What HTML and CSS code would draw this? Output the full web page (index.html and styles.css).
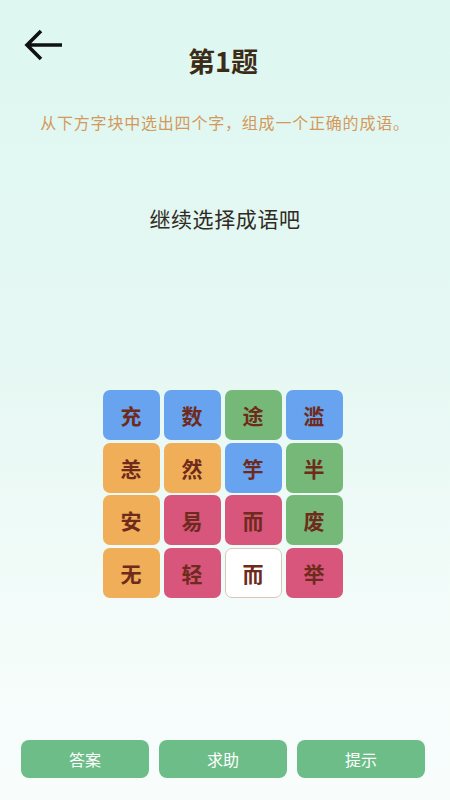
FILE: index.html
```html
<!DOCTYPE html>
<html lang="zh">
<head>
<meta charset="utf-8">
<link rel="stylesheet" href="styles.css">
</head>
<body>
<div class="page">
  <header class="header">
    <button class="back" aria-label="返回">
      <svg width="40" height="34" viewBox="0 0 40 34"><path d="M39 17H5M18 3L4 17L18 31" fill="none" stroke="#111" stroke-width="3.6" stroke-linecap="butt" stroke-linejoin="miter"/></svg>
    </button>
    <h1 class="title">第1题</h1>
    <span></span>
  </header>
  <p class="hint">从下方字块中选出四个字，组成一个正确的成语。</p>
  <p class="status">继续选择成语吧</p>
  <main class="board">
    <div class="grid">
      <div class="tile blue">充</div>
      <div class="tile blue">数</div>
      <div class="tile green">途</div>
      <div class="tile blue">滥</div>
      <div class="tile orange">恙</div>
      <div class="tile orange">然</div>
      <div class="tile blue">竽</div>
      <div class="tile green">半</div>
      <div class="tile orange">安</div>
      <div class="tile pink">易</div>
      <div class="tile pink">而</div>
      <div class="tile green">废</div>
      <div class="tile orange">无</div>
      <div class="tile pink">轻</div>
      <div class="tile white">而</div>
      <div class="tile pink">举</div>
    </div>
  </main>
  <footer class="actions">
    <button class="btn">答案</button>
    <button class="btn">求助</button>
    <button class="btn">提示</button>
  </footer>
</div>
</body>
</html>
```
FILE: styles.css
```css
* { box-sizing: border-box; }
html, body { margin: 0; padding: 0; }
body {
  font-family: "Noto Sans CJK SC", "Noto Sans", sans-serif;
  background: #f5fdfb;
}
.page {
  width: 450px;
  height: 800px;
  display: flex;
  flex-direction: column;
  background: linear-gradient(180deg, #def7f1 0%, #e6f8f3 45%, #f4fcfa 80%, #f8fdfc 100%);
}
.header {
  display: grid;
  grid-template-columns: 1fr auto 1fr;
  padding: 28px 0 0 0;
  height: 80px;
}
.back {
  justify-self: start;
  align-self: start;
  margin-left: 23px;
  border: 0;
  background: none;
  padding: 0;
  width: 40px;
  height: 34px;
  display: block;
}
.back svg { display: block; }
.title {
  margin: 15px 0 0 0;
  font-size: 27px;
  font-weight: 700;
  color: #3b2c17;
  line-height: 36px;
  align-self: start;
  padding-right: 4px;
}
.hint {
  margin: 31px 0 0 0;
  text-align: center;
  font-size: 16px;
  letter-spacing: 0.8px;
  color: #d4995a;
  line-height: 22px;
}
.status {
  margin: 70px 0 0 0;
  text-align: center;
  font-size: 21px;
  letter-spacing: 0.6px;
  color: #2f2a22;
  line-height: 30px;
}
.board {
  flex: 1;
  display: flex;
  justify-content: center;
  padding-top: 157px;
  padding-right: 5px;
}
.grid {
  display: grid;
  grid-template-columns: repeat(4, 57px);
  grid-auto-rows: 50px;
  gap: 2.5px 4px;
  align-content: start;
}
.tile {
  border-radius: 7px;
  display: flex;
  align-items: center;
  justify-content: center;
  font-size: 21px;
  font-weight: 700;
  color: #6e2b1c;
}
.blue { background: #67a3ef; }
.green { background: #76b878; }
.orange { background: #f0ae58; }
.pink { background: #d8557c; }
.white { background: #ffffff; border: 1px solid #d9c8b6; }
.actions {
  display: flex;
  justify-content: center;
  gap: 10px;
  padding: 0 4px 22px 0;
}
.btn {
  width: 128px;
  height: 38px;
  border: 0;
  border-radius: 8px;
  background: #6cbd88;
  color: #ffffff;
  font-family: "Noto Sans CJK SC", "Noto Sans", sans-serif;
  font-size: 16px;
  padding: 0;
}
```
